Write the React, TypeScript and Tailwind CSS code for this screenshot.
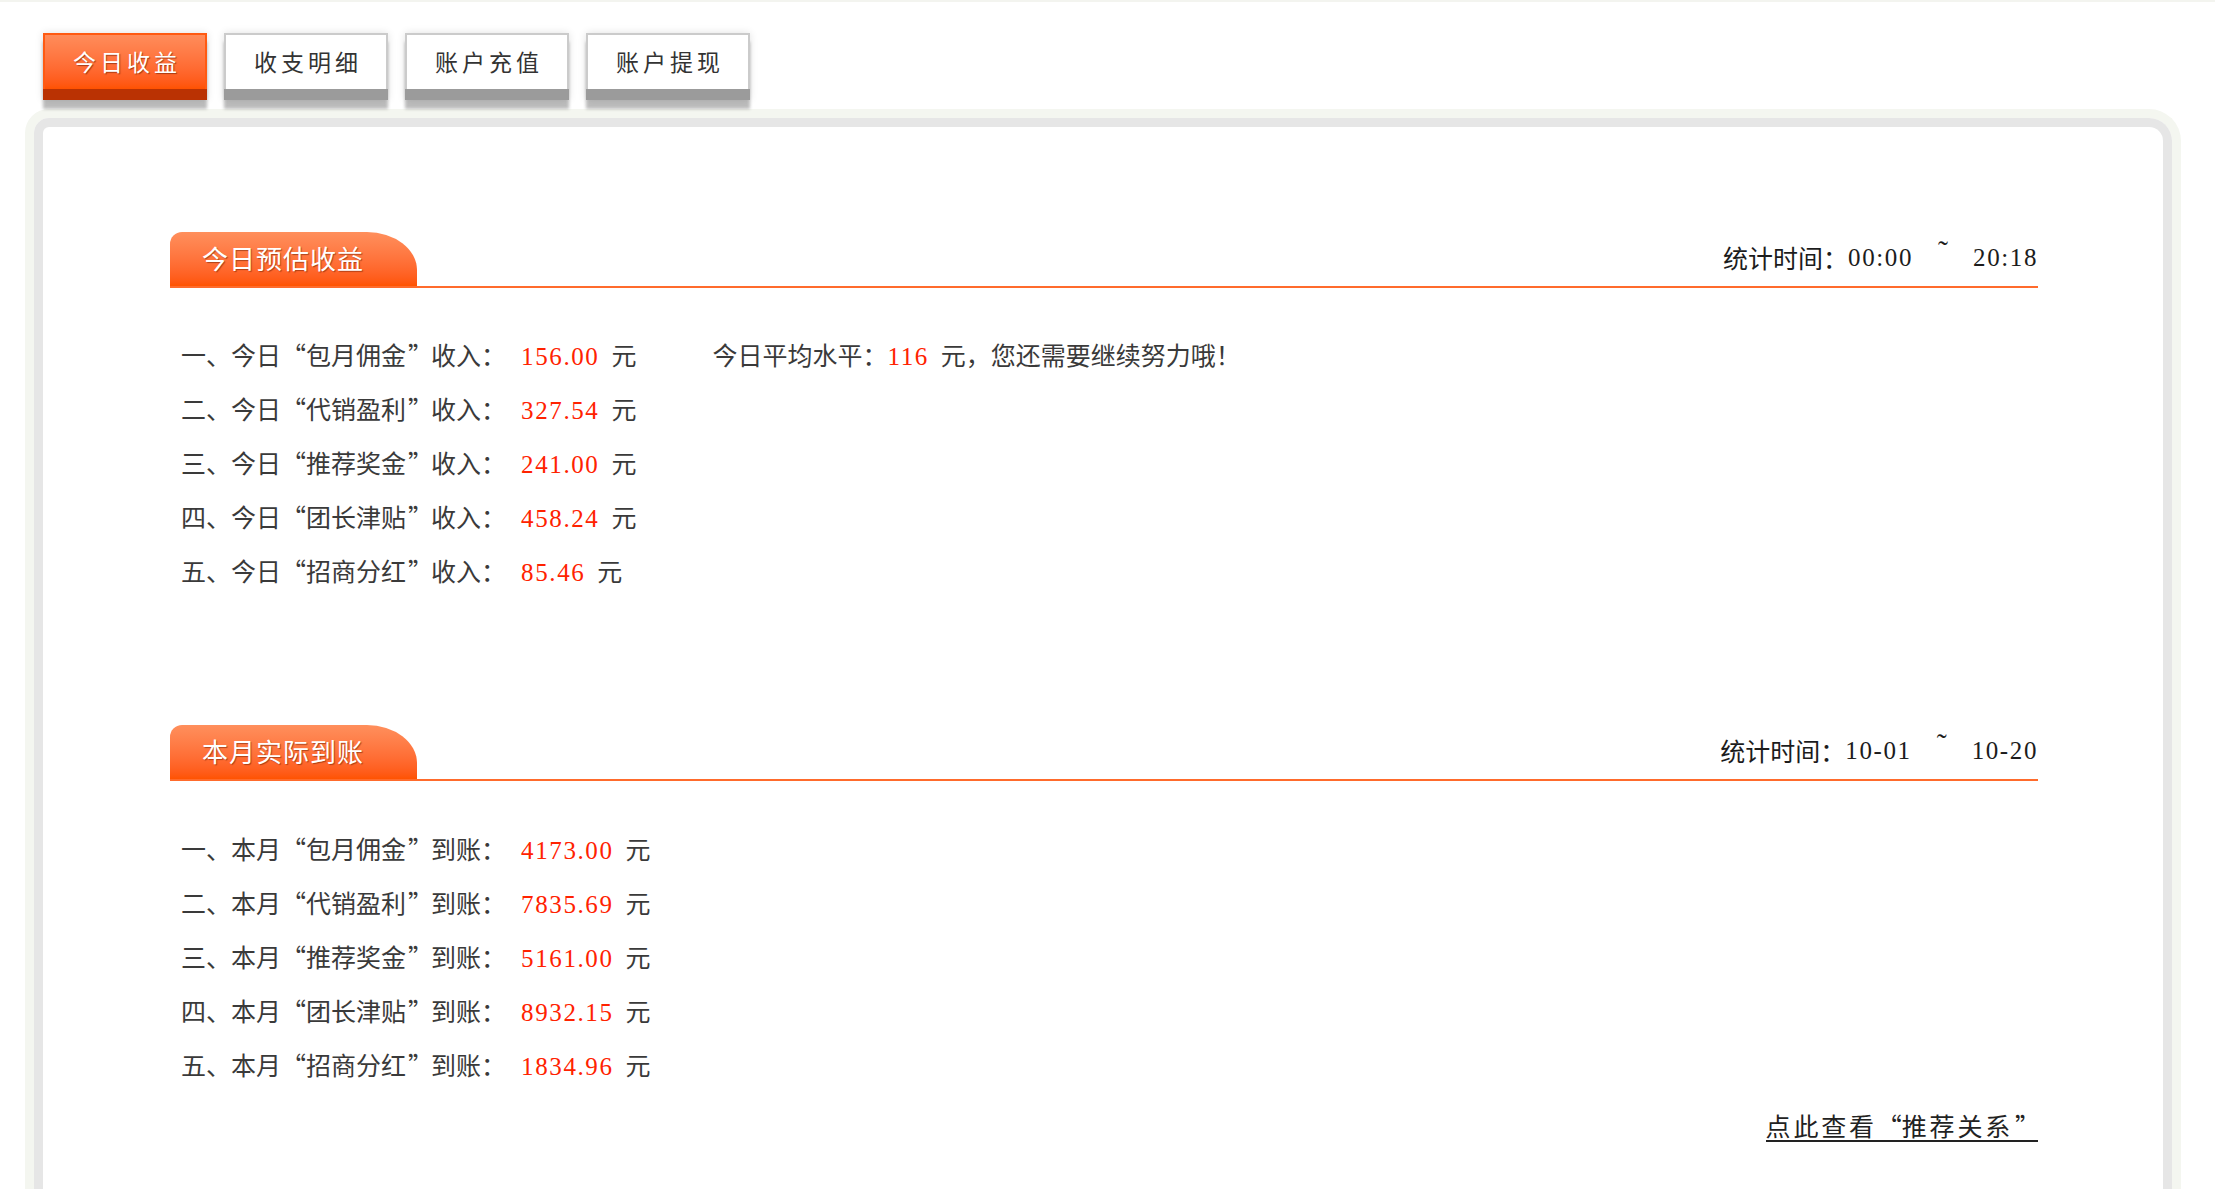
const tabs = ['今日收益', '收支明细', '账户充值', '账户提现'];

const today = [
  { no: '一', name: '包月佣金', value: '156.00' },
  { no: '二', name: '代销盈利', value: '327.54' },
  { no: '三', name: '推荐奖金', value: '241.00' },
  { no: '四', name: '团长津贴', value: '458.24' },
  { no: '五', name: '招商分红', value: '85.46' },
];

const month = [
  { no: '一', name: '包月佣金', value: '4173.00' },
  { no: '二', name: '代销盈利', value: '7835.69' },
  { no: '三', name: '推荐奖金', value: '5161.00' },
  { no: '四', name: '团长津贴', value: '8932.15' },
  { no: '五', name: '招商分红', value: '1834.96' },
];

const cjk = "font-['Noto_Sans_CJK_SC',sans-serif]";
const num = "font-['Liberation_Serif','Noto_Sans_CJK_SC',serif] tracking-[1.6px] leading-none";

function Quote({ open }: { open?: boolean }) {
  return (
    <span className={'inline-block w-[1em] ' + (open ? 'text-right pr-[2px]' : 'text-left pl-[2px]')}>
      {open ? '“' : '”'}
    </span>
  );
}

function SectionHeader({ title, from, to }: { title: string; from: string; to: string }) {
  return (
    <div className="flex items-center justify-between border-b-2 border-[#ff6b2c]">
      <div className="flex h-[54px] w-[247px] items-center rounded-tl-[12px] rounded-tr-[50px_38px] bg-gradient-to-b from-[#ff8f5c] to-[#ff5300] pb-[3px] pl-[32px] text-[26px] tracking-[1px] text-white [text-shadow:1px_1px_1px_rgba(110,30,0,0.55)]">
        {title}
      </div>
      <div className="flex items-center pb-[3px] text-[25px] text-[#1c1c1c]">
        <span>统计时间：</span>
        <span className={num}>{from}</span>
        <span className="mx-[25px] -mt-[14px] font-['Liberation_Serif',serif] text-[30px]">˜</span>
        <span className={num}>{to}</span>
      </div>
    </div>
  );
}

function Row({
  no,
  prefix,
  name,
  suffix,
  value,
  extra,
}: {
  no: string;
  prefix: string;
  name: string;
  suffix: string;
  value: string;
  extra?: boolean;
}) {
  return (
    <div className="h-[54px] whitespace-nowrap text-[25px] leading-[54px] text-[#3a3a3a]">
      {no}、{prefix}
      <Quote open />
      {name}
      <Quote />
      {suffix}：
      <span className={num + ' ml-[15px] text-[#ff2200]'}>{value}</span>
      <span className="ml-[12px]">元</span>
      {extra && (
        <span className="ml-[76px]">
          今日平均水平：<span className={num + ' text-[#ff2200]'}>116</span>
          <span className="ml-[12px]">元，您还需要继续努力哦！</span>
        </span>
      )}
    </div>
  );
}

export default function App() {
  return (
    <div className={'min-h-screen border-t-2 border-[#f3f4ef] bg-white pl-[25px] pr-[34px] pt-[31px] ' + cjk}>
      <div className="ml-[18px] flex gap-[17px]">
        {tabs.map((t, i) => (
          <div
            key={t}
            className="flex w-[164px] flex-col shadow-[0_9px_3px_rgba(0,0,0,0.26),0_0_8px_rgba(0,0,0,0.12)]"
          >
            {i === 0 ? (
              <div className="flex h-[56px] items-center justify-center border-2 border-b-0 border-[#ff5a12] bg-gradient-to-b from-[#ff8c5a] to-[#ff5200] pb-[2px] pl-[4px] text-[23px] tracking-[4px] text-white [text-shadow:1px_1px_1px_rgba(110,30,0,0.6)]">
                {t}
              </div>
            ) : (
              <div className="flex h-[56px] items-center justify-center border-2 border-b-0 border-[#cbcbcb] bg-white pb-[2px] pl-[4px] text-[23px] tracking-[4px] text-[#333]">
                {t}
              </div>
            )}
            <div className={'h-[11px] ' + (i === 0 ? 'bg-[#ba3203]' : 'bg-[#9b9b9b]')} />
          </div>
        ))}
      </div>

      <div className="mt-[9px] rounded-tl-[24px] rounded-tr-[32px] border-[9px] border-b-0 border-[#f4f6f0]">
        <div className="rounded-tl-[15px] rounded-tr-[23px] border-[9px] border-b-0 border-[#e6e6e6] bg-white pb-[100px] pl-[127px] pr-[125px] pt-[105px]">
          <SectionHeader title="今日预估收益" from="00:00" to="20:18" />
          <div className="mt-[39px] pl-[11px]">
            {today.map((r, i) => (
              <Row key={r.no} no={r.no} prefix="今日" name={r.name} suffix="收入" value={r.value} extra={i === 0} />
            ))}
          </div>

          <div className="mt-[128px]">
            <SectionHeader title="本月实际到账" from="10-01" to="10-20" />
          </div>
          <div className="mt-[40px] pl-[11px]">
            {month.map((r) => (
              <Row key={r.no} no={r.no} prefix="本月" name={r.name} suffix="到账" value={r.value} />
            ))}
          </div>

          <div className="mt-[19px] flex justify-end">
            <a
              href="#"
              className="inline-block border-b-2 border-[#222] text-[25px] leading-[30px] tracking-[2.8px] text-[#222]"
            >
              点此查看<Quote open />推荐关系<Quote />
            </a>
          </div>
        </div>
      </div>
    </div>
  );
}
